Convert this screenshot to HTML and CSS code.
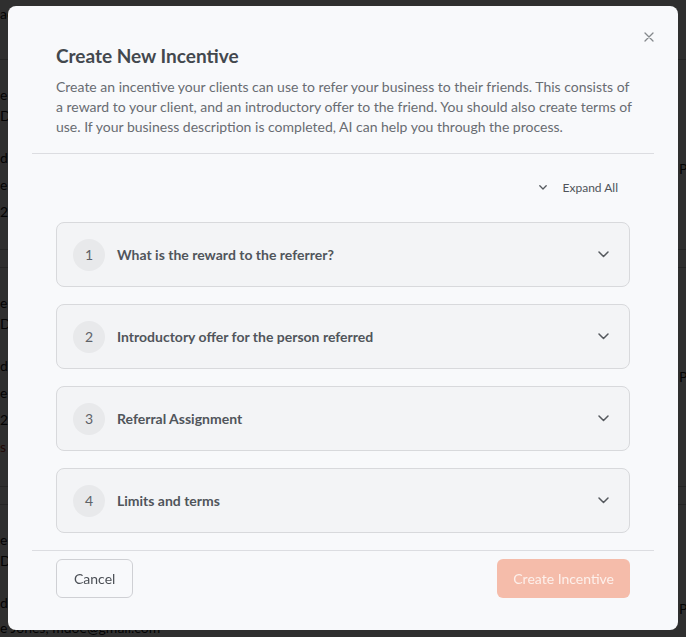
FILE: index.html
```html
<!DOCTYPE html>
<html lang="en">
<head>
    <meta charset="UTF-8">
    <meta name="viewport" content="width=device-width, initial-scale=1.0">
    <title>Create New Incentive</title>

    <link rel="stylesheet" href="styles.css">
</head>
<body>
    <!-- page behind the dialog, dimmed by the backdrop -->
    <div id="page">
        <div class="page-row row-a">
            <div class="cell-left"><span>ac</span></div>
            <div class="cell-right"></div>
        </div>
        <div class="page-row row-b">
            <div class="cell-left">
                <span class="l1">er</span>
                <span class="l2">Do</span>
                <span class="l3">d</span>
                <span class="l4">e</span>
                <span class="l5">20</span>
            </div>
            <div class="cell-right"><span class="p1">P</span></div>
        </div>
        <div class="page-row row-gap"><div class="cell-left"></div><div class="cell-right"></div></div>
        <div class="page-row row-c">
            <div class="cell-left">
                <span class="l1">er</span>
                <span class="l2">Do</span>
                <span class="l3">d</span>
                <span class="l4">e</span>
                <span class="l5">2</span>
                <span class="l6 red">s</span>
            </div>
            <div class="cell-right"><span class="p1">P</span></div>
        </div>
        <div class="page-row row-gap"><div class="cell-left"></div><div class="cell-right"></div></div>
        <div class="page-row row-d">
            <div class="cell-left">
                <span class="l1">er</span>
                <span class="l2">Do</span>
                <span class="l3">d</span>
                <span class="l4">e Jones, mdoe@gmail.com</span>
            </div>
            <div class="cell-right"><span class="p1">P</span></div>
        </div>
    </div>

    <div id="backdrop">
        <div id="modal">
            <button class="close-btn" aria-label="Close">
                <svg width="10" height="10" viewBox="0 0 10 10">
                    <path d="M1 1L9 9M9 1L1 9" stroke="#85888c" stroke-width="1.3" stroke-linecap="round" fill="none"/>
                </svg>
            </button>

            <div class="modal-head">
                <h2 class="modal-title">Create New Incentive</h2>
                <p class="modal-desc">Create an incentive your clients can use to refer your business to their friends. This consists of a reward to your client, and an introductory offer to the friend. You should also create terms of use. If your business description is completed, AI can help you through the process.</p>
            </div>

            <div class="modal-body">
                <div class="expand-row">
                    <button class="expand-btn">
                        <svg width="8" height="5" viewBox="0 0 8 5">
                            <path d="M0.8 0.8L4 4L7.2 0.8" stroke="#55595e" stroke-width="1.3" fill="none" stroke-linecap="round" stroke-linejoin="round"/>
                        </svg>
                        Expand All
                    </button>
                </div>

                <div class="steps">
                    <div class="step">
                        <span class="step-num">1</span>
                        <span class="step-title">What is the reward to the referrer?</span>
                        <svg class="chev" width="11" height="7" viewBox="0 0 11 7">
                            <path d="M1 1L5.5 5.5L10 1" stroke="#55595e" stroke-width="1.5" fill="none" stroke-linecap="round" stroke-linejoin="round"/>
                        </svg>
                    </div>
                    <div class="step">
                        <span class="step-num">2</span>
                        <span class="step-title">Introductory offer for the person referred</span>
                        <svg class="chev" width="11" height="7" viewBox="0 0 11 7">
                            <path d="M1 1L5.5 5.5L10 1" stroke="#55595e" stroke-width="1.5" fill="none" stroke-linecap="round" stroke-linejoin="round"/>
                        </svg>
                    </div>
                    <div class="step">
                        <span class="step-num">3</span>
                        <span class="step-title">Referral Assignment</span>
                        <svg class="chev" width="11" height="7" viewBox="0 0 11 7">
                            <path d="M1 1L5.5 5.5L10 1" stroke="#55595e" stroke-width="1.5" fill="none" stroke-linecap="round" stroke-linejoin="round"/>
                        </svg>
                    </div>
                    <div class="step">
                        <span class="step-num">4</span>
                        <span class="step-title">Limits and terms</span>
                        <svg class="chev" width="11" height="7" viewBox="0 0 11 7">
                            <path d="M1 1L5.5 5.5L10 1" stroke="#55595e" stroke-width="1.5" fill="none" stroke-linecap="round" stroke-linejoin="round"/>
                        </svg>
                    </div>
                </div>
            </div>

            <div class="modal-foot">
                <button class="btn btn-outline">Cancel</button>
                <button class="btn btn-primary" disabled>Create Incentive</button>
            </div>
        </div>
    </div>
</body>
</html>
```

FILE: styles.css
```css
body, html {
    padding: 0;
    margin: 0;
}

body {
    width: 686px;
    height: 637px;
    overflow: hidden;
    background-color: white;
    font-family: Lato, "Open Sans", sans-serif;
}

button {
    font-family: inherit;
}

/* page behind the dialog */
#page {
    display: flex;
    flex-direction: column;
    font-size: 14px;
    color: #111;
}

.page-row {
    display: grid;
    grid-template-columns: 679px 1fr;
    border-bottom: 1px solid #c8c8c8;
}

.row-a { height: 59px; }
.row-b { height: 189px; }
.row-gap { height: 17px; }
.row-c { height: 218px; }
.row-d { height: 140px; border-bottom: none; }

.cell-left, .cell-right {
    display: flex;
    flex-direction: column;
    white-space: nowrap;
    overflow: hidden;
}

.row-a .cell-left { padding-top: 5px; }
.cell-left .l1 { margin-top: 26px; }
.cell-left .l2 { margin-top: 4px; }
.cell-left .l3 { margin-top: 25px; }
.cell-left .l4 { margin-top: 10px; }
.cell-left .l5 { margin-top: 10px; }
.cell-left .l6 { margin-top: 10px; }
.row-d .cell-left .l4 { margin-top: 8px; }
.red { color: #b0301c; }

.cell-right .p1 { margin-top: 100px; }
.row-c .cell-right .p1 { margin-top: 100px; }
.row-d .cell-right .p1 { margin-top: 95px; }

/* dialog */
#backdrop {
    position: fixed;
    inset: 0;
    padding: 6px 8px;
    background-color: rgba(0, 0, 0, 0.815);
}

#modal {
    position: relative;
    display: flex;
    flex-direction: column;
    width: 670px;
    height: 624px;
    box-sizing: border-box;
    border-radius: 8px;
    background-color: #f8f9fb;
}

.close-btn {
    position: absolute;
    top: 21px;
    right: 19px;
    width: 20px;
    height: 20px;
    padding: 0;
    display: flex;
    align-items: center;
    justify-content: center;
    border: none;
    background: none;
}

.modal-head {
    margin: 0 24px;
    padding: 36px 16px 16px 24px;
    border-bottom: 1px solid #dcdde1;
}

.modal-title {
    margin: 0 0 7px 0;
    font-size: 19px;
    line-height: 28px;
    font-weight: 700;
    color: #43484e;
}

.modal-desc {
    margin: 0;
    font-size: 14px;
    line-height: 20px;
    color: #686c72;
}

.modal-body {
    flex: 1;
    margin: 0 24px;
    padding: 19px 24px 17px 24px;
    border-bottom: 1px solid #dcdde1;
}

.expand-row {
    display: flex;
    justify-content: flex-end;
    margin-bottom: 21px;
}

.expand-btn {
    display: flex;
    align-items: center;
    gap: 16px;
    height: 28px;
    padding: 0 12px 0 0;
    border: none;
    background: none;
    font-size: 12px;
    color: #4f5359;
}

.steps {
    display: flex;
    flex-direction: column;
    gap: 17px;
}

.step {
    display: flex;
    align-items: center;
    height: 65px;
    box-sizing: border-box;
    padding: 0 20px 0 16px;
    border: 1px solid #d8d9dc;
    border-radius: 8px;
    background-color: #f3f4f6;
}

.step-num {
    display: flex;
    align-items: center;
    justify-content: center;
    width: 32px;
    height: 32px;
    border-radius: 50%;
    background-color: #e8e9eb;
    font-size: 14px;
    color: #5e6268;
}

.step-title {
    flex: 1;
    margin-left: 12px;
    font-size: 14px;
    font-weight: 700;
    color: #50555b;
}

.modal-foot {
    display: flex;
    justify-content: space-between;
    padding: 8px 48px 32px 48px;
}

.btn {
    height: 39px;
    box-sizing: border-box;
    border-radius: 6px;
    font-size: 14px;
}

.btn-outline {
    padding: 0 17px;
    border: 1px solid #cfd0d4;
    background: transparent;
    color: #4b4f55;
}

.btn-primary {
    padding: 0 16px;
    border: none;
    background-color: #f5bcaa;
    color: #fdf0eb;
}
```
